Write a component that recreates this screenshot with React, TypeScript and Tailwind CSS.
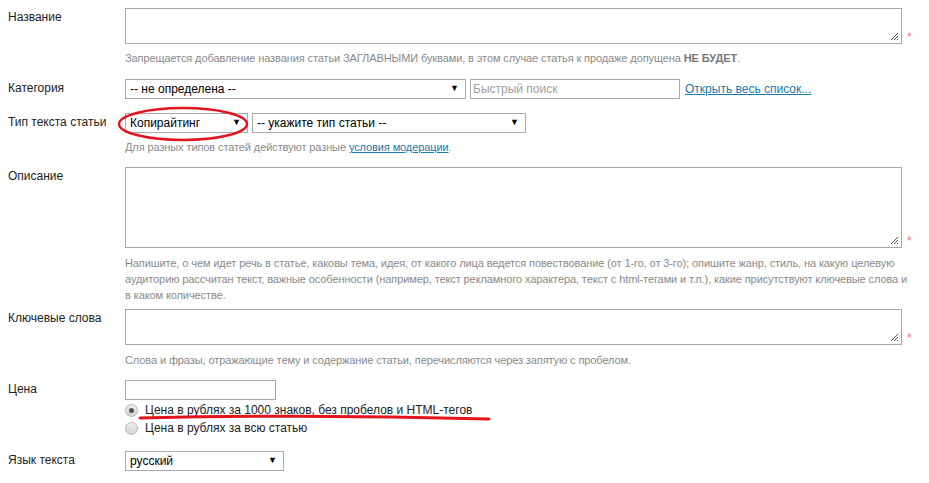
import React from "react";

const font = { fontFamily: '"Liberation Sans", Arial, sans-serif' };

function Grip() {
  return (
    <svg className="absolute right-[2px] bottom-[2px]" width="9" height="9" viewBox="0 0 9 9">
      <path d="M8 1L1 8M8 4L4 8M8 7L7 8" stroke="#555" strokeWidth="1" />
    </svg>
  );
}

function Area({ h }: { h: string }) {
  return (
    <div className="flex items-end">
      <div className={`relative w-[777px] ${h} border border-[#a9a9a9] bg-white`}>
        <Grip />
      </div>
      <span className="ml-[5px] mb-[1px] text-[12px] leading-[12px] text-[#ff6f7f]">*</span>
    </div>
  );
}

function Select({ w, label }: { w: string; label: string }) {
  return (
    <div className={`${w} h-[20px] border border-[#a9a9a9] bg-white flex items-center justify-between pl-[4px] pr-[6px] text-[12px] text-black`}>
      <span>{label}</span>
      <span className="text-[9px]">▼</span>
    </div>
  );
}

function Hint({ children, mt }: { children: React.ReactNode; mt: string }) {
  return (
    <div className={`${mt} pl-[117px] pr-[18px] text-[11px] leading-[16px] tracking-[-0.1px] text-[#8a8a8a]`}>
      {children}
    </div>
  );
}

function Row({ label, mt, children }: { label: string; mt: string; children: React.ReactNode }) {
  return (
    <div className={`${mt} flex`}>
      <div className="w-[117px] shrink-0 mt-[1px] text-[12px] leading-[16px] text-[#222]">{label}</div>
      <div>{children}</div>
    </div>
  );
}

function Radio({ checked }: { checked?: boolean }) {
  return (
    <span className="w-[13px] h-[13px] rounded-full border border-[#b5b5b5] bg-gradient-to-b from-[#eeeeee] to-[#d4d4d4] flex items-center justify-center shrink-0">
      {checked && <span className="w-[5px] h-[5px] rounded-full bg-[#555]" />}
    </span>
  );
}

export default function App() {
  return (
    <div className="relative w-[929px] h-[483px] overflow-hidden bg-white pl-[8px] pt-[8px]" style={font}>
      <Row label="Название" mt="mt-0">
        <Area h="h-[36px]" />
      </Row>
      <Hint mt="mt-[6px]">
        Запрещается добавление названия статьи ЗАГЛАВНЫМИ буквами, в этом случае статья к продаже допущена <b className="text-[#777]">НЕ БУДЕТ</b>.
      </Hint>

      <Row label="Категория" mt="mt-[13px]">
        <div className="flex items-center">
          <Select w="w-[341px]" label="-- не определена --" />
          <div className="ml-[4px] w-[210px] h-[20px] border border-[#a9a9a9] pl-[2px] text-[12px] leading-[18px] text-[#a0a0a0]">Быстрый поиск</div>
          <a className="ml-[5px] text-[12px] text-[#1a7aa8] underline">Открыть весь список...</a>
        </div>
      </Row>

      <Row label="Тип текста статьи" mt="mt-[14px]">
        <div className="flex">
          <Select w="w-[123px]" label="Копирайтинг" />
          <div className="ml-[4px]">
            <Select w="w-[274px]" label="-- укажите тип статьи --" />
          </div>
        </div>
      </Row>
      <Hint mt="mt-[6px]">
        Для разных типов статей действуют разные <a className="text-[#1a7aa8] underline">условия модерации</a>.
      </Hint>

      <Row label="Описание" mt="mt-[12px]">
        <Area h="h-[81px]" />
      </Row>
      <Hint mt="mt-[7px]">
        Напишите, о чем идет речь в статье, каковы тема, идея, от какого лица ведется повествование (от 1-го, от 3-го); опишите жанр, стиль, на какую целевую аудиторию рассчитан текст, важные особенности (например, текст рекламного характера, текст с html-тегами и т.п.), какие присутствуют ключевые слова и в каком количестве.
      </Hint>

      <Row label="Ключевые слова" mt="mt-[6px]">
        <Area h="h-[36px]" />
      </Row>
      <Hint mt="mt-[7px]">
        Слова и фразы, отражающие тему и содержание статьи, перечисляются через запятую с пробелом.
      </Hint>

      <Row label="Цена" mt="mt-[12px]">
        <div className="w-[151px] h-[20px] border border-[#a9a9a9] bg-white" />
        <div className="mt-[1px] flex flex-col text-[12px] leading-[18px] text-[#222]">
          <label className="flex items-center gap-[7px]">
            <Radio checked />
            <span>Цена в рублях за 1000 знаков, без пробелов и HTML-тегов</span>
          </label>
          <label className="flex items-center gap-[7px]">
            <Radio />
            <span>Цена в рублях за всю статью</span>
          </label>
        </div>
      </Row>

      <Row label="Язык текста" mt="mt-[14px]">
        <Select w="w-[159px]" label="русский" />
      </Row>

      <svg className="absolute left-0 top-0 pointer-events-none" width="929" height="483">
        <ellipse cx="183" cy="124" rx="64" ry="16" fill="none" stroke="#e3141d" strokeWidth="2.5" />
        <path d="M140 418 Q 315 414 489 419" fill="none" stroke="#e3141d" strokeWidth="3" strokeLinecap="round" />
      </svg>
    </div>
  );
}
